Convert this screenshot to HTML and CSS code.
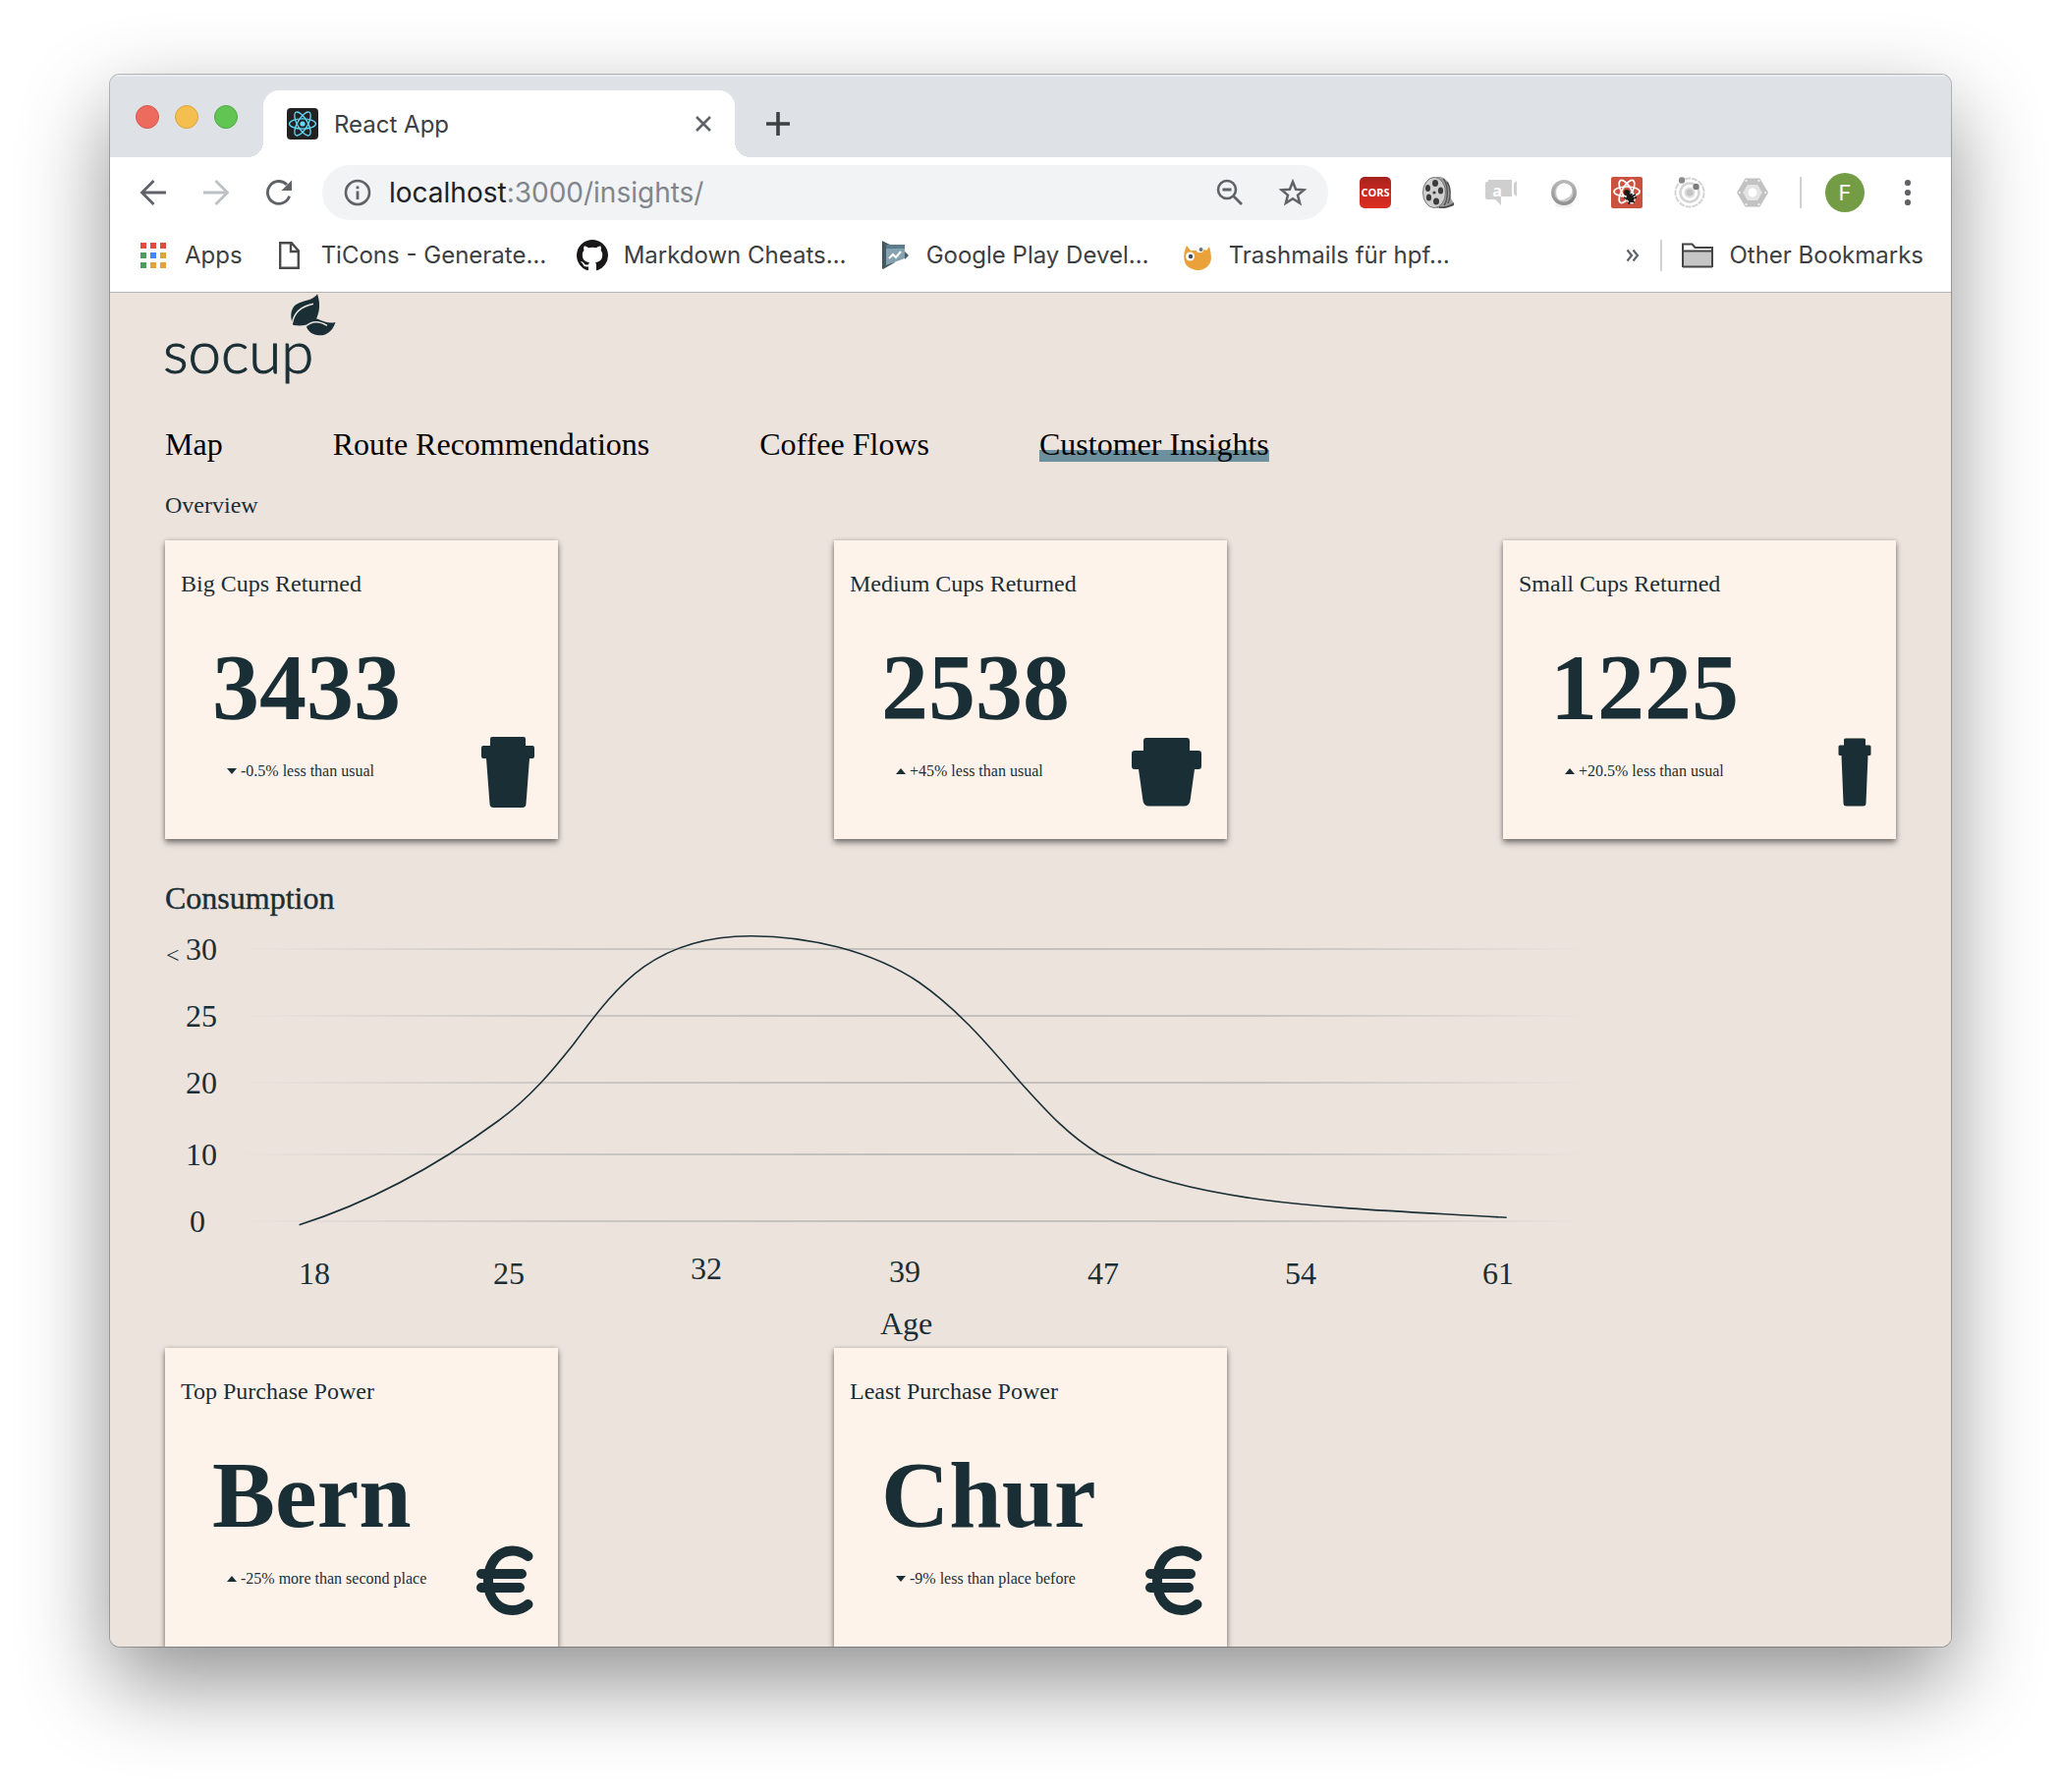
FILE: index.html
```html
<!DOCTYPE html>
<html lang="en">
<head>
<meta charset="utf-8">
<title>React App</title>
<link rel="stylesheet" href="styles.css">
</head>
<body>
<div class="window">
  <header class="tabstrip">
    <div class="lights">
      <button class="light light-close" aria-label="Close window"></button>
      <button class="light light-min" aria-label="Minimise window"></button>
      <button class="light light-max" aria-label="Zoom window"></button>
    </div>
    <div class="tab">
      <svg class="icon32" viewBox="0 0 32 32"><rect width="32" height="32" rx="4" fill="#222"/><g fill="none" stroke="#61dafb" stroke-width="1.3"><ellipse cx="16" cy="16" rx="13.5" ry="5.2"/><ellipse cx="16" cy="16" rx="13.5" ry="5.2" transform="rotate(60 16 16)"/><ellipse cx="16" cy="16" rx="13.5" ry="5.2" transform="rotate(120 16 16)"/></g><circle cx="16" cy="16" r="2.6" fill="#61dafb"/></svg>
      <span class="tab-title">React App</span>
      <button class="plain tab-close" aria-label="Close tab"><svg width="16" height="16" viewBox="0 0 16 16"><path d="M1 1l14 14M15 1L1 15" stroke="#5f6368" stroke-width="2.6"/></svg></button>
    </div>
    <button class="plain tool" aria-label="New tab"><svg width="24" height="24" viewBox="0 0 24 24"><path d="M12 1v22M1 12h22" stroke="#3c4043" stroke-width="3.6" stroke-linecap="round"/></svg></button>
  </header>

  <div class="toolbar">
    <button class="plain tool" aria-label="Back"><svg width="28" height="28" viewBox="0 0 28 28"><path d="M27 14H3M14.500 2L2.500 14l12 12" fill="none" stroke="#5f6368" stroke-width="2.800"/></svg></button>
    <button class="plain tool" aria-label="Forward"><svg width="28" height="28" viewBox="0 0 28 28"><path d="M1 14h24M13.500 2l12 12-12 12" fill="none" stroke="#bdc1c6" stroke-width="2.800"/></svg></button>
    <button class="plain tool" aria-label="Reload"><svg width="28" height="28" viewBox="0 0 28 28"><path d="M24.600 17.600A11.400 11.400 0 1 1 22 6" fill="none" stroke="#5f6368" stroke-width="2.900"/><path d="M27 1.500V12H16.500z" fill="#5f6368"/></svg></button>
    <div class="omnibox">
      <svg width="28" height="28" viewBox="0 0 28 28"><circle cx="14" cy="14" r="12" fill="none" stroke="#5f6368" stroke-width="2.600"/><path d="M12.600 12.500h2.800V21h-2.800zM12.600 7.500h2.800v2.800h-2.800z" fill="#5f6368"/></svg>
      <div class="url" role="textbox" aria-label="Address"><span class="host">localhost</span>:3000/insights/</div>
      <button class="plain" aria-label="Zoom"><svg width="28" height="28" viewBox="0 0 28 28"><circle cx="11" cy="11" r="9" fill="none" stroke="#5f6368" stroke-width="2.600"/><path d="M6.500 11h9M17.500 17.500l8.500 8.500" stroke="#5f6368" stroke-width="2.800"/></svg></button>
      <button class="plain" aria-label="Bookmark this page"><svg width="28" height="28" viewBox="0 0 28 28"><path d="M14 3l3.100 7.700 8.400.600-6.500 5.300 2.100 8.100L14 20.200l-7.100 4.500L9 16.600l-6.500-5.300 8.400-.600z" fill="none" stroke="#5f6368" stroke-width="2.500"/></svg></button>
    </div>
    <div class="extensions">
      <button class="plain tool" aria-label="CORS"><svg class="icon32" viewBox="0 0 32 32"><defs><linearGradient id="cors" x1="0" y1="0" x2="0" y2="1"><stop offset="0" stop-color="#a3221d"/><stop offset=".25" stop-color="#bb2520"/><stop offset="1" stop-color="#dc2f22"/></linearGradient></defs><rect width="32" height="32" rx="5" fill="url(#cors)"/><text x="16" y="20" text-anchor="middle" class="cors-text">CORS</text></svg></button>
      <button class="plain tool" aria-label="Film"><svg class="icon32" viewBox="0 0 32 32"><path d="M14 0h4c7 1 10 8 10 15 0 5 1 8 4 12-3 3-8 5-18 5z" fill="#9c9c9c"/><path d="M21 2c5 5 6 20 1 27M25 5c4 6 4 16 1 22" fill="none" stroke="#555" stroke-width="1.500"/><path d="M17 30c6 1 11-1 15-4v3c-5 2-10 4-15 3z" fill="#4f4f4f"/><ellipse cx="12" cy="16" rx="11.500" ry="15.500" fill="#d0d0d0" stroke="#777"/><g fill="#3c3c3c"><ellipse cx="13" cy="6.500" rx="3" ry="3.400"/><ellipse cx="5.500" cy="11.500" rx="2.500" ry="3.600"/><ellipse cx="18.500" cy="14" rx="2.600" ry="3.600"/><ellipse cx="6.500" cy="21" rx="2.600" ry="3.600"/><ellipse cx="14" cy="25" rx="3" ry="3.600"/><circle cx="12" cy="16" r="1.600"/></g></svg></button>
      <button class="plain tool" aria-label="Chat"><svg class="icon32" viewBox="0 0 32 32"><g fill="#cfcfcf"><path d="M3 3h24v17h-11v9l-6-6H2a2 2 0 0 1-2-2V7a2 2 0 0 1 2-2h1zM29 6.500L32 4v16l-3-2.500z"/></g><text x="12" y="20" text-anchor="middle" class="chat-text">a</text></svg></button>
      <button class="plain tool" aria-label="Ring"><svg class="icon32" viewBox="0 0 32 32"><defs><linearGradient id="ring" x1="0" y1="0" x2="0" y2="1"><stop offset="0" stop-color="#bababa"/><stop offset="1" stop-color="#8f8f8f"/></linearGradient></defs><ellipse cx="16" cy="29" rx="9" ry="2.500" fill="#f0f0f0"/><circle cx="16" cy="16" r="13" fill="url(#ring)"/><circle cx="16" cy="16" r="9.500" fill="#c9c9c9"/><path d="M10.500 23C5 14 10 6.500 17 6.500c8 1 9 9 5 13-3 3-7 5-11.500 3.500z" fill="#fff"/></svg></button>
      <button class="plain tool" aria-label="React Developer Tools"><svg class="icon32" viewBox="0 0 32 32"><rect width="32" height="32" rx="2" fill="#cc5240"/><g fill="none" stroke="#fff" stroke-width="1.700"><ellipse cx="16" cy="15" rx="13" ry="5"/><ellipse cx="16" cy="15" rx="13" ry="5" transform="rotate(60 16 15)"/><ellipse cx="16" cy="15" rx="13" ry="5" transform="rotate(120 16 15)"/></g><g fill="#1a1a1a" stroke="#1a1a1a" stroke-width="1.500"><circle cx="16" cy="16" r="2.300"/><ellipse cx="19.500" cy="21.500" rx="2.500" ry="4" transform="rotate(-30 19.500 21.500)"/><path d="M13 21l11 5M21 17l-3 10M25 18l-10 5M18 28l2-5M26 21l-4 1" fill="none"/></g></svg></button>
      <button class="plain tool" aria-label="Orbit"><svg class="icon32" viewBox="0 0 32 32"><circle cx="16" cy="16" r="14.500" fill="none" stroke="#d4d4d4" stroke-width="2" stroke-dasharray="6 1"/><circle cx="16" cy="16" r="9.500" fill="none" stroke="#d4d4d4" stroke-width="2.500"/><circle cx="16" cy="16" r="5.500" fill="#dedede"/><circle cx="16" cy="16" r="3.500" fill="#c4c4c4"/><circle cx="8" cy="3.500" r="3.200" fill="#8b8b8b"/><circle cx="22.500" cy="10" r="3.200" fill="#7c7c7c"/></svg></button>
      <button class="plain tool" aria-label="Hexagon"><svg class="icon32" viewBox="0 0 32 32"><path d="M8.500 1.500h15L32 16l-8.500 14.500h-15L0 16z" fill="#c2c2c2"/><path d="M11 8h10l5 8-5 8H11l-5-8z" fill="#e4e4e4"/><circle cx="16" cy="16" r="4.500" fill="#fff"/><g fill="#fff"><circle cx="9.500" cy="4" r="1"/><circle cx="22.500" cy="4" r="1"/><circle cx="2.800" cy="16" r="1"/><circle cx="29.200" cy="16" r="1"/><circle cx="9.500" cy="28" r="1"/><circle cx="22.500" cy="28" r="1"/></g></svg></button>
    </div>
    <span class="divider"></span>
    <button class="avatar" aria-label="Profile">F</button>
    <button class="plain tool" aria-label="Menu"><svg width="8" height="28" viewBox="0 0 8 28"><g fill="#5f6368"><circle cx="4" cy="4" r="3.100"/><circle cx="4" cy="14" r="3.100"/><circle cx="4" cy="24" r="3.100"/></g></svg></button>
  </div>

  <nav class="bookmarks" aria-label="Bookmarks">
    <a href="#" class="bookmark"><svg class="icon32" viewBox="0 0 32 32"><g fill="#e04a3f"><path d="M3 3h6v6H3zM13 3h6v6h-6zM23 3h6v6h-6z"/></g><path d="M3 13h6v6H3zM3 23h6v6H3z" fill="#4f9d5c"/><path d="M13 13h6v6h-6z" fill="#4285f4"/><path d="M23 13h6v6h-6zM13 23h6v6h-6zM23 23h6v6h-6z" fill="#e3a336"/></svg>Apps</a>
    <a href="#" class="bookmark bookmark-wide"><svg class="icon32" viewBox="0 0 32 32"><path d="M6.200 3.200h11.600l7 8v17.600H6.200zM17 3v9h8" fill="none" stroke="#4a4a4a" stroke-width="2.400"/></svg>TiCons - Generate…</a>
    <a href="#" class="bookmark bookmark-wide"><svg class="icon32" viewBox="0 0 16 16"><path fill="#191717" d="M8 0C3.580 0 0 3.580 0 8c0 3.540 2.290 6.530 5.470 7.590.4.070.55-.17.55-.38 0-.19-.01-.82-.01-1.490-2.010.37-2.530-.49-2.690-.94-.09-.23-.48-.94-.82-1.130-.28-.15-.68-.52-.01-.53.63-.01 1.080.58 1.230.82.72 1.210 1.870.87 2.330.66.070-.52.28-.87.51-1.070-1.780-.2-3.640-.89-3.640-3.950 0-.87.31-1.590.82-2.150-.08-.2-.36-1.020.08-2.120 0 0 .67-.21 2.200.82.64-.18 1.320-.27 2-.27s1.360.09 2 .27c1.530-1.040 2.200-.82 2.200-.82.44 1.100.16 1.920.08 2.120.51.56.82 1.270.82 2.150 0 3.070-1.870 3.750-3.650 3.950.29.25.54.73.54 1.480 0 1.070-.01 1.930-.01 2.200 0 .21.15.46.55.38A8.010 8.010 0 0 0 16 8c0-4.420-3.580-8-8-8z"/></svg>Markdown Cheats…</a>
    <a href="#" class="bookmark bookmark-wide"><svg class="icon32" viewBox="0 0 32 32"><path d="M3 1l5 3v22l-5 4z" fill="#3b4a54"/><path d="M4 2l12 5v16L4 30z" fill="#455a64"/><path d="M7 5h19v14L7 26z" fill="#84a2b0"/><path d="M7 5h19v4H7z" fill="#5d7b8a"/><path d="M26 12l4 4-4 4z" fill="#455a64"/><path d="M10 19l4-4 3 3 5-6" fill="none" stroke="#fff" stroke-width="2"/></svg>Google Play Devel…</a>
    <a href="#" class="bookmark bookmark-wide"><svg class="icon32" viewBox="0 0 32 32"><path d="M5 6l4 5h8l4-2 4 2 3-4c2 7 3 14 0 18-3 4-7 6-11 6S7 29 4 25C1 19 2 12 5 6z" fill="#eba13a"/><circle cx="8.500" cy="17" r="4.500" fill="#fff"/><circle cx="18.500" cy="9.500" r="3.800" fill="#fff"/><circle cx="9" cy="17" r="2.200" fill="#3b4a5c"/><circle cx="19.500" cy="10" r="2" fill="#6a737c"/></svg>Trashmails für hpf…</a>
    <button class="plain overflow" aria-label="More bookmarks"><svg width="14" height="14" viewBox="0 0 14 14"><path d="M1.500 1.500L6 7l-4.500 5.500M7.500 1.500L12 7l-4.500 5.500" fill="none" stroke="#5f6368" stroke-width="2.200"/></svg></button>
    <span class="divider"></span>
    <a href="#" class="bookmark"><svg class="icon32" viewBox="0 0 32 32"><path d="M1 27V4.500h9.500l3 3.500H31v19z" fill="#fff" stroke="#444" stroke-width="2"/><path d="M2 12h28v15H2z" fill="#c6c6c6"/><path d="M1 11.500h30M1 27.500h30" stroke="#444" stroke-width="2"/></svg>Other Bookmarks</a>
  </nav>

  <main class="page">
    <svg class="logo" viewBox="0 0 176 104" role="img" aria-label="socup">
      <text x="-2" y="82" class="logo-text">socup</text>
      <path d="M130.600 33C127.500 26 127.500 20 130.500 15 136 7 149 10 155 1.300 157.500 8 158 17 155 24c-1 3-2 5-3 5.500-6 2-8 5-21.400 3.500z" fill="#1a2e35"/>
      <path d="M129.500 31C131 21 138 14 151 11.300" fill="none" stroke="#ece4de" stroke-width="1.500"/>
      <path d="M144 35c-2-5 6-9 11-8.500 6 3 12 5 18.500 3.500-3 9-9 14-17 13.300-6-.500-10-3-12.500-8.300z" fill="#1a2e35"/>
      <path d="M143 34.500c6-6 14-6 22-1.200" fill="none" stroke="#ece4de" stroke-width="1.500"/>
    </svg>
    <nav class="menu" aria-label="Main">
      <a href="#">Map</a>
      <a href="#">Route Recommendations</a>
      <a href="#">Coffee Flows</a>
      <a href="#" class="current" aria-current="page">Customer Insights</a>
    </nav>

    <h1 class="overview">Overview</h1>
    <section class="cards">
      <article class="card">
        <div class="card-body">
          <h2 class="card-title">Big Cups Returned</h2>
          <p class="figure">3433</p>
          <p class="trend"><svg width="10" height="6" viewBox="0 0 10 6"><path d="M0 0h10L5 6z"/></svg>-0.5% less than usual</p>
        </div>
        <svg class="card-icon" width="54" height="72" viewBox="0 0 54 72"><path d="M11 0h32a2 2 0 0 1 2 2v7h7a2 2 0 0 1 2 2v9a2 2 0 0 1-2 2h-3l-3.500 46a4 4 0 0 1-4 4h-29a4 4 0 0 1-4-4L5 22H2a2 2 0 0 1-2-2v-9a2 2 0 0 1 2-2h7V2a2 2 0 0 1 2-2z"/></svg>
      </article>
      <article class="card">
        <div class="card-body">
          <h2 class="card-title">Medium Cups Returned</h2>
          <p class="figure">2538</p>
          <p class="trend"><svg width="10" height="6" viewBox="0 0 10 6"><path d="M0 6h10L5 0z"/></svg>+45% less than usual</p>
        </div>
        <svg class="card-icon" width="73" height="72" viewBox="0 0 73 72"><path d="M15 1h41a3 3 0 0 1 3 3v10h9a3 3 0 0 1 3 3v13a3 3 0 0 1-3 3h-4l-4.500 32a6 6 0 0 1-6 5.500h-36a6 6 0 0 1-6-5.500L7 33H3a3 3 0 0 1-3-3V17a3 3 0 0 1 3-3h9V4a3 3 0 0 1 3-3z"/></svg>
      </article>
      <article class="card">
        <div class="card-body">
          <h2 class="card-title">Small Cups Returned</h2>
          <p class="figure">1225</p>
          <p class="trend"><svg width="10" height="6" viewBox="0 0 10 6"><path d="M0 6h10L5 0z"/></svg>+20.5% less than usual</p>
        </div>
        <svg class="card-icon" width="35" height="72" viewBox="0 0 35 72"><path d="M7.500 1.500h19a1.500 1.500 0 0 1 1.500 1.500v5.500h4a1.500 1.500 0 0 1 1.500 1.500v7.500a1.500 1.500 0 0 1-1.500 1.500h-1.500l-2 48.500a3 3 0 0 1-3 3h-17a3 3 0 0 1-3-3L3.500 19H2a1.500 1.500 0 0 1-1.500-1.500V10A1.500 1.500 0 0 1 2 8.500h4V3a1.500 1.500 0 0 1 1.500-1.500z"/></svg>
      </article>
    </section>

    <h2 class="chart-title">Consumption</h2>
    <svg class="chart" viewBox="0 2 1448 430" role="img" aria-label="Cup consumption by customer age">
      <defs><linearGradient id="grid" gradientUnits="userSpaceOnUse" x1="74" y1="0" x2="1447" y2="0"><stop offset="0" stop-color="#1a2e35" stop-opacity="0"/><stop offset=".25" stop-color="#1a2e35" stop-opacity=".16"/><stop offset=".5" stop-color="#1a2e35" stop-opacity=".2"/><stop offset=".76" stop-color="#1a2e35" stop-opacity=".18"/><stop offset="1" stop-color="#1a2e35" stop-opacity="0"/></linearGradient></defs>
      <g fill="url(#grid)"><rect x="74" y="25" width="1373" height="2"/><rect x="74" y="93" width="1373" height="2"/><rect x="74" y="161" width="1373" height="2"/><rect x="74" y="234" width="1373" height="2"/><rect x="74" y="302" width="1373" height="2"/></g>
      <path class="curve" d="M136.600 306.700C205 285 272 250 339 201C372 177 395 149 415.700 123C462 60 500 12.700 597 12.700C655 12.700 720 28 767.700 60C808 88 838 124 870.800 161.700C899 193 920 216 951 234.700C995 259 1050 272 1115.700 281C1190 291 1280 294 1365.700 299.300"/>
      <g class="chart-label">
        <text x="1" y="40" class="less">&lt;</text><text x="21" y="37">30</text><text x="21" y="105">25</text><text x="21" y="173">20</text><text x="21" y="246">10</text><text x="25" y="314">0</text>
        <text x="136" y="367">18</text><text x="334" y="367">25</text><text x="535" y="362">32</text><text x="737" y="365">39</text><text x="939" y="367">47</text><text x="1140" y="367">54</text><text x="1341" y="367">61</text>
        <text x="728" y="418">Age</text>
      </g>
    </svg>

    <section class="cards">
      <article class="card">
        <div class="card-body">
          <h2 class="card-title">Top Purchase Power</h2>
          <p class="figure">Bern</p>
          <p class="trend"><svg width="10" height="6" viewBox="0 0 10 6"><path d="M0 6h10L5 0z"/></svg>-25% more than second place</p>
        </div>
        <svg class="card-icon euro" width="59" height="72" viewBox="0 0 59 72"><path d="M52.500 12C47 8 42 6.500 37 6.500 21 6.500 12 20 12 37S21 67 37 67c6 0 11-2 15.500-6M5 30h41M5 44h39"/></svg>
      </article>
      <article class="card">
        <div class="card-body">
          <h2 class="card-title">Least Purchase Power</h2>
          <p class="figure">Chur</p>
          <p class="trend"><svg width="10" height="6" viewBox="0 0 10 6"><path d="M0 0h10L5 6z"/></svg>-9% less than place before</p>
        </div>
        <svg class="card-icon euro" width="59" height="72" viewBox="0 0 59 72"><path d="M52.500 12C47 8 42 6.500 37 6.500 21 6.500 12 20 12 37S21 67 37 67c6 0 11-2 15.500-6M5 30h41M5 44h39"/></svg>
      </article>
    </section>
  </main>
</div>
</body>
</html>
```
FILE: styles.css
```css
* { box-sizing: border-box; }

body {
  margin: 0;
  height: 100vh;
  padding: 76px 112px 148px;
  background: #fff;
  font-family: Inter, "Liberation Sans", sans-serif;
}

h1, h2, p { margin: 0; font-weight: 400; }
a { color: inherit; text-decoration: none; }
svg { display: block; flex: none; }

.window {
  display: flex;
  flex-direction: column;
  height: 100%;
  overflow: hidden;
  border-radius: 10px;
  background: #fff;
  box-shadow: 0 0 0 1px rgba(0, 0, 0, .25), 0 36px 90px rgba(0, 0, 0, .44);
}

.plain {
  display: flex;
  align-items: center;
  justify-content: center;
  padding: 0;
  border: 0;
  background: none;
}
.tool { width: 40px; height: 40px; flex: none; }
.icon32 { width: 32px; height: 32px; }
.divider { width: 2px; height: 32px; background: #cfd1d4; }

/* Tab strip */
.tabstrip {
  display: flex;
  align-items: center;
  gap: 24px;
  padding: 16px 24px 0 26px;
  background: #dee1e6;
  box-shadow: inset 0 2px 0 #e9ebee;
}
.lights { display: flex; gap: 16px; padding-bottom: 14px; }
.light { width: 24px; height: 24px; padding: 0; border: 1px solid; border-radius: 50%; }
.light-close { background: #ed6a5e; border-color: #d8574c; }
.light-min { background: #f5bf4f; border-color: #dba63c; }
.light-max { background: #61c554; border-color: #4eaa42; }
.tab {
  position: relative;
  display: flex;
  align-items: center;
  gap: 16px;
  width: 480px;
  height: 68px;
  margin-left: 2px;
  padding: 0 24px;
  border-radius: 16px 16px 0 0;
  background: #fff;
  color: #3c4043;
  font-size: 24px;
}
.tab::before, .tab::after {
  content: "";
  position: absolute;
  bottom: 0;
  width: 16px;
  height: 16px;
}
.tab::before { right: 100%; background: radial-gradient(circle at 0 0, transparent 16px, #fff 16px); }
.tab::after { left: 100%; background: radial-gradient(circle at 100% 0, transparent 16px, #fff 16px); }
.tab-close { margin-left: auto; }

/* Toolbar */
.toolbar {
  display: flex;
  align-items: center;
  gap: 24px;
  height: 72px;
  flex: none;
  padding: 0 24px;
}
.omnibox {
  display: flex;
  flex: 1;
  align-items: center;
  gap: 36px;
  height: 56px;
  padding: 0 22px;
  border-radius: 28px;
  background: #f1f3f4;
}
.url { flex: 1; margin-left: -18px; color: #80868b; font-size: 28px; }
.host { color: #202124; }
.extensions { display: flex; gap: 24px; margin: 0 4px; }
.cors-text { fill: #fff; font: 700 11px "Open Sans", sans-serif; }
.chat-text { fill: #fff; font: 700 16px "Open Sans", sans-serif; }
.avatar {
  width: 40px;
  height: 40px;
  padding: 0;
  border: 0;
  border-radius: 50%;
  background: #739c45;
  color: #fff;
  font: 22px Inter, sans-serif;
}

/* Bookmarks bar */
.bookmarks {
  display: flex;
  align-items: center;
  gap: 20px;
  height: 66px;
  flex: none;
  padding: 0 28px 10px;
  border-bottom: 1px solid #b6b4b4;
  color: #3c4043;
  font-size: 24px;
}
.bookmark { display: flex; align-items: center; gap: 16px; white-space: nowrap; }
.bookmark-wide { width: 276px; margin-left: 12px; }
.overflow { width: 16px; height: 32px; margin-left: auto; }

/* Page */
.page {
  flex: 1;
  min-height: 0;
  overflow: hidden;
  padding: 0 56px;
  background: #ece3dd;
  color: #1a2e35;
  font-family: "Liberation Serif", serif;
}
.logo { width: 176px; height: 104px; overflow: visible; }
.logo-text { fill: #1a2e35; stroke: #1a2e35; stroke-width: 1; font: 300 60px Lato, sans-serif; }
.menu {
  display: flex;
  gap: 112px;
  margin-top: 32px;
  color: #000;
  font-size: 32px;
  line-height: 36px;
}
.current { background: linear-gradient(#6c909e, #6c909e) bottom / 100% 12px no-repeat; }
.overview { margin: 28px 0 20px; font-size: 24px; line-height: 32px; }

.cards {
  display: grid;
  grid-template-columns: repeat(3, 400px);
  justify-content: space-between;
}
.card {
  display: flex;
  justify-content: space-between;
  min-height: 304px;
  padding: 28px 24px 32px 16px;
  background: #fef3ea;
  box-shadow: 0 4px 6px rgba(0, 0, 0, .45), 0 0 4px rgba(0, 0, 0, .2);
}
.card-title { font-size: 24px; line-height: 32px; white-space: nowrap; }
.figure { margin: 32px 0 16px 32px; font-size: 96px; font-weight: 700; line-height: 116px; }
.trend {
  display: flex;
  align-items: center;
  gap: 4px;
  padding-left: 47px;
  font-size: 16px;
  line-height: 22px;
  white-space: nowrap;
}
.trend svg, .card-icon { fill: #1a2e35; }
.card-icon { align-self: flex-end; }
.euro path { fill: none; stroke: #1a2e35; stroke-width: 10; stroke-linecap: round; }

.chart-title { margin: 40px 0 8px; font-size: 32px; line-height: 40px; }
.chart-title, .chart-label { -webkit-text-stroke: 0.4px #1a2e35; }
.chart { width: 100%; max-width: 1448px; height: auto; }
.chart-label { fill: #1a2e35; font-size: 32px; }
.less { font-size: 24px; }
.curve { fill: none; stroke: #1a2e35; stroke-width: 1.600; }
```
